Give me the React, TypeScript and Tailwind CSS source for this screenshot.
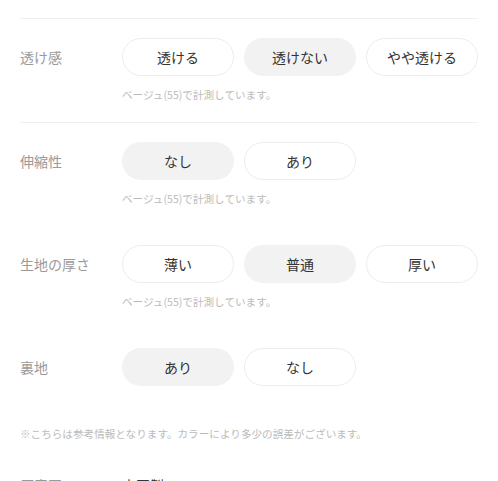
import React from 'react';

interface SpecRow {
  label: string;
  options: string[];
  selected: number;
  note?: string;
}

const NOTE = 'ベージュ(55)で計測しています。';

const rows: SpecRow[] = [
  { label: '透け感', options: ['透ける', '透けない', 'やや透ける'], selected: 1, note: NOTE },
  { label: '伸縮性', options: ['なし', 'あり'], selected: 0, note: NOTE },
  { label: '生地の厚さ', options: ['薄い', '普通', '厚い'], selected: 1, note: NOTE },
  { label: '裏地', options: ['あり', 'なし'], selected: 0 },
];

function OptionPill({ text, active }: { text: string; active: boolean }) {
  return (
    <div
      className={`w-[112px] h-[38px] rounded-full flex items-center justify-center text-[14px] text-[#333] ${
        active ? 'bg-[#f2f2f2]' : 'bg-white border border-[#ececec]'
      }`}
    >
      {text}
    </div>
  );
}

function SpecSection({ row, bordered }: { row: SpecRow; bordered: boolean }) {
  return (
    <div className={`pt-[19px] pb-[20px] ${bordered ? 'border-y border-[#f0f0f0]' : ''}`}>
      <div className="flex items-center">
        <div className="w-[102px] text-[14px] text-[#9a9a9a]">{row.label}</div>
        <div className="flex gap-[10px]">
          {row.options.map((o, i) => (
            <OptionPill key={o} text={o} active={i === row.selected} />
          ))}
        </div>
      </div>
      {row.note && (
        <p className="mt-[12px] ml-[102px] text-[10.6px] leading-[14px] text-[#bbb]">{row.note}</p>
      )}
    </div>
  );
}

export default function App() {
  return (
    <div
      className="w-[498px] h-[481px] overflow-hidden bg-white px-5 pt-[18px]"
      style={{ fontFamily: '"Noto Sans CJK JP", "Noto Sans", sans-serif' }}
    >
      {rows.map((r, i) => (
        <SpecSection key={r.label} row={r} bordered={i === 0} />
      ))}
      <p className="mt-[21px] text-[10.6px] leading-[14px] text-[#bbb]">
        ※こちらは参考情報となります。カラーにより多少の誤差がございます。
      </p>
      <div className="flex items-center mt-[34px]">
        <div className="w-[102px] text-[14px] text-[#9a9a9a]">原産国</div>
        <div className="text-[14px] text-[#333]">中国製</div>
      </div>
    </div>
  );
}
